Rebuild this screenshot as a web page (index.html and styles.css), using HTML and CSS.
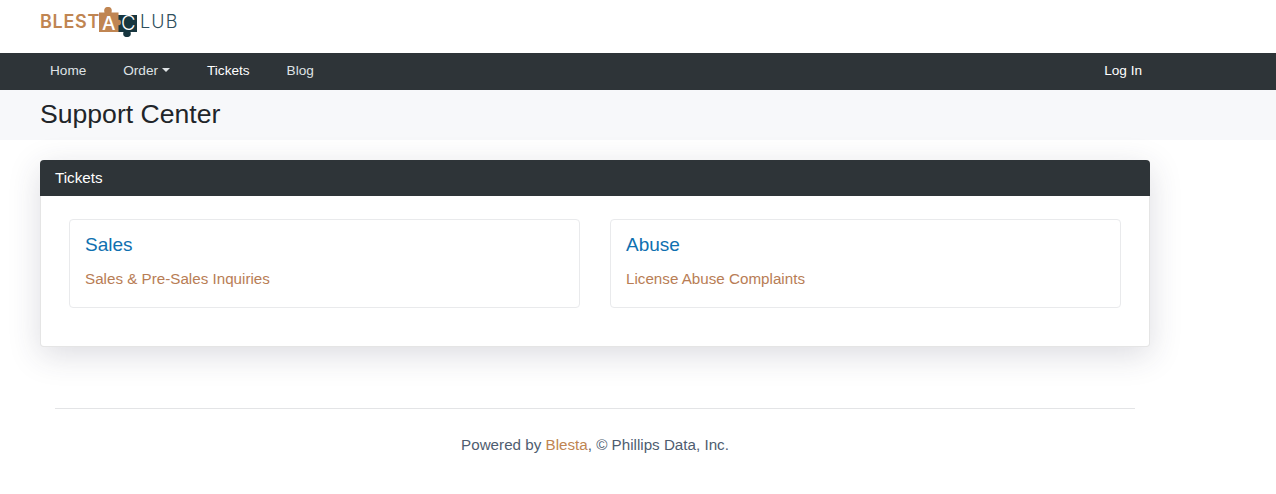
FILE: index.html
```html
<!DOCTYPE html>
<html lang="en">
<head>
<meta charset="utf-8">
<title>Support Center</title>
<link rel="stylesheet" href="styles.css">
</head>
<body>
<header class="brand-bar">
  <div class="logo">
    <span class="logo-orange">BLEST</span>
    <span class="logo-piece">
      <svg class="logo-art" width="41" height="31" viewBox="0 0 41 31" aria-hidden="true">
        <path fill="#17363f" d="M19 9H38V26H31.500C32.500 29 31 31 28 31S23.500 29 24.500 26H19Z"/>
        <path fill="#c08552" d="M0 6.500H5.500C4.500 3 6 1 9 1S13.500 3 12.500 6.500H19.500V14C20.500 13.500 22 14 22 16.500S20.500 19.500 19.500 19V26H0Z"/>
      </svg>
      <span class="logo-a">A</span>
      <span class="logo-c">C</span>
    </span>
    <span class="logo-dark">LUB</span>
  </div>
</header>
<nav class="navbar">
  <ul class="nav-list">
    <li><a class="nav-link" href="#">Home</a></li>
    <li><a class="nav-link" href="#">Order<span class="caret"></span></a></li>
    <li><a class="nav-link active" href="#">Tickets</a></li>
    <li><a class="nav-link" href="#">Blog</a></li>
  </ul>
  <a class="nav-link login" href="#">Log In</a>
</nav>
<div class="title-bar"><h1>Support Center</h1></div>
<main class="content">
  <section class="panel">
    <div class="panel-head">Tickets</div>
    <div class="panel-body">
      <a class="dept" href="#">
        <h2>Sales</h2>
        <p>Sales &amp; Pre-Sales Inquiries</p>
      </a>
      <a class="dept" href="#">
        <h2>Abuse</h2>
        <p>License Abuse Complaints</p>
      </a>
    </div>
  </section>
</main>
<footer class="footer">
  <p>Powered by <a href="#">Blesta</a>, © Phillips Data, Inc.</p>
</footer>
</body>
</html>
```
FILE: styles.css
```css
* { box-sizing: border-box; }
html, body { margin: 0; padding: 0; }
body {
  background: #fff;
  color: #212529;
  font-family: "Liberation Sans", Arial, sans-serif;
  font-size: 15.2px;
  line-height: 1.5;
  overflow: hidden;
  height: 494px;
}
a { text-decoration: none; }

.brand-bar { height: 53px; padding: 6px 0 0 40px; }
.logo {
  display: flex;
  align-items: flex-start;
  height: 31px;
  font-family: Inter, "Liberation Sans", sans-serif;
  font-size: 18px;
  line-height: 1;
}
.logo-orange { width: 59px; margin-top: 7px; color: #c08552; font-weight: 600; letter-spacing: 0.7px; }
.logo-dark { margin-top: 7px; color: #2f4f5c; font-weight: 300; letter-spacing: 1.2px; }
.logo-piece { position: relative; display: block; width: 41px; height: 31px; }
.logo-art { display: block; }
.logo-a, .logo-c { position: absolute; color: #fff; }
.logo-a { top: 8px; left: 3px; font-size: 19px; font-weight: 500; }
.logo-c { top: 7px; left: 22px; font-size: 20px; font-weight: 300; }

.navbar {
  display: flex;
  justify-content: space-between;
  align-items: center;
  height: 37px;
  background: #2e3438;
  padding: 0 124px 0 40px;
}
.nav-list { display: flex; list-style: none; margin: 0; padding: 0; gap: 17px; }
.nav-link { display: block; padding: 7px 10px 9px; color: #dfe3e6; font-size: 13.6px; line-height: 21px; }
.nav-link.active, .login { color: #fff; }
.caret {
  display: inline-block;
  margin-left: 4px;
  vertical-align: 3px;
  border-top: 4px solid #dfe3e6;
  border-left: 4px solid transparent;
  border-right: 4px solid transparent;
}

.title-bar { height: 50px; background: #f7f8fa; padding: 0 40px; }
.title-bar h1 { margin: 0; font-size: 26.6px; font-weight: 400; line-height: 48px; color: #212529; }

.content { padding: 20px 126px 0 40px; }
.panel {
  background: #fff;
  border-radius: 4px;
  border: 1px solid rgba(0, 0, 0, 0.1);
  border-top: 0;
  box-shadow: 0 8px 32px rgba(50, 50, 80, 0.17);
  height: 187px;
}
.panel-head {
  height: 36px;
  margin: 0 -1px;
  padding: 0 15px;
  background: #2e3438;
  color: #fff;
  border-radius: 4px 4px 0 0;
  font-size: 15.2px;
  line-height: 36px;
}
.panel-body { display: flex; gap: 30px; padding: 23px 28px 0; }
.dept {
  flex: 1;
  display: block;
  height: 89px;
  padding: 11px 15px 0;
  border: 1px solid #e9eaec;
  border-radius: 4px;
}
.dept h2 { margin: 0; color: #0f70b0; font-size: 19px; font-weight: 400; line-height: 28px; }
.dept p { margin: 9px 0 0; color: #b87d55; font-size: 15.2px; line-height: 21px; }

.footer { margin: 61px 141px 0 55px; border-top: 1px solid #e3e4e6; padding-top: 25px; text-align: center; }
.footer p { margin: 0; color: #4f5d70; font-size: 15.2px; line-height: 21px; }
.footer a { color: #c08552; }
```
